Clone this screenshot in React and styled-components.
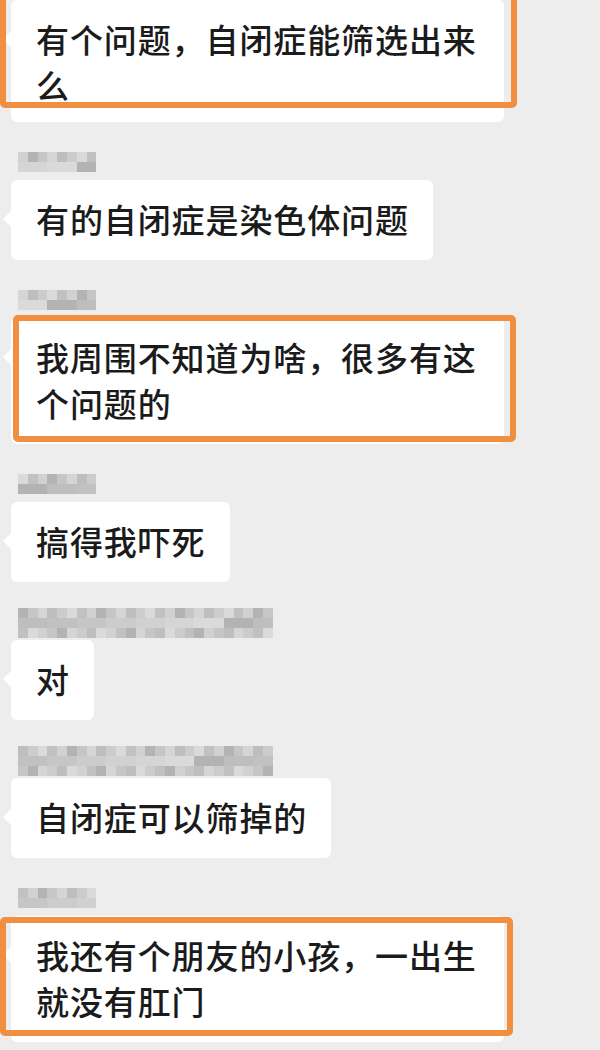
import React from 'react';
import styled, { createGlobalStyle } from 'styled-components';

const messages = [
  { text: '有个问题，自闭症能筛选出来么', hideName: true, tight: true, mark: { top: -12, bottom: 14, left: -11, right: -13 } },
  { text: '有的自闭症是染色体问题', name: 'short' },
  { text: '我周围不知道为啥，很多有这个问题的', name: 'short', mark: { top: -3, bottom: 2, left: 2, right: -12 } },
  { text: '搞得我吓死', name: 'short' },
  { text: '对', name: 'long' },
  { text: '自闭症可以筛掉的', name: 'long' },
  { text: '我还有个朋友的小孩，一出生就没有肛门', name: 'short', mark: { top: 1, bottom: 6, left: -11, right: -9 } },
];

const shades = ['#c9c9c9', '#b9b9b9', '#d3d3d3', '#c2c2c2', '#adadad', '#cecece', '#bdbdbd', '#d8d8d8'];

const buildCells = (cols, rows, seed) => {
  const cells = [];
  for (let r = 0; r < rows; r++) {
    for (let c = 0; c < cols; c++) {
      const n = (c * 7 + r * 13 + seed * 5 + ((c * r) % 3)) % shades.length;
      cells.push(shades[n]);
    }
  }
  return cells;
};

const App = () => {
  return (
    <>
      <GlobalStyle />
      <Chat>
        {messages.map((msg, i) => {
          const long = msg.name === 'long';
          const cols = long ? 26 : 8;
          const rows = long ? 3 : 2;
          return (
            <Group key={i}>
              {!msg.hideName && (
                <NameRow>
                  <Mosaic $cols={cols} $long={long}>
                    {buildCells(cols, rows, i).map((shade, k) => (
                      <Cell key={k} $shade={shade} />
                    ))}
                  </Mosaic>
                </NameRow>
              )}
              <Bubble $tight={msg.tight}>
                {msg.text}
                {msg.mark && (
                  <Highlight
                    $top={msg.mark.top}
                    $bottom={msg.mark.bottom}
                    $left={msg.mark.left}
                    $right={msg.mark.right}
                  />
                )}
              </Bubble>
            </Group>
          );
        })}
      </Chat>
    </>
  );
};

export default App;

const GlobalStyle = createGlobalStyle`
  html, body {
    margin: 0;
    padding: 0;
    background: #ededed;
    overflow: hidden;
  }
  body {
    font-family: "Noto Sans CJK SC", "Noto Sans", sans-serif;
  }
`;

const Chat = styled.div`
  width: 600px;
  height: 1050px;
  box-sizing: border-box;
  padding: 0 0 0 11px;
  display: flex;
  flex-direction: column;
  gap: 26px;
  overflow: hidden;
`;

const Group = styled.div`
  display: flex;
  flex-direction: column;
  align-items: flex-start;
`;

const NameRow = styled.div`
  height: 24px;
  margin: 0 0 8px 7px;
  display: flex;
  align-items: flex-end;
`;

const Mosaic = styled.div`
  display: grid;
  grid-template-columns: repeat(${({ $cols }) => $cols}, 9.8px);
  grid-auto-rows: 10px;
  filter: blur(0.7px);
  opacity: 0.9;
  ${({ $long }) => $long && 'margin-bottom: -6px;'}
`;

const Cell = styled.span`
  background: ${({ $shade }) => $shade};
`;

const Bubble = styled.div`
  position: relative;
  box-sizing: border-box;
  max-width: 493px;
  padding: 16px 24px ${({ $tight }) => ($tight ? '14px' : '18px')} 25px;
  background: #ffffff;
  border-radius: 6px;
  font-size: 33px;
  font-weight: 500;
  line-height: 46px;
  letter-spacing: 0.9px;
  color: #1b1b1b;
  word-break: break-all;

  &::before {
    content: '';
    position: absolute;
    left: -8px;
    top: 31px;
    border-top: 8px solid transparent;
    border-bottom: 8px solid transparent;
    border-right: 8px solid #ffffff;
  }
`;

const Highlight = styled.div`
  position: absolute;
  top: ${({ $top }) => $top}px;
  bottom: ${({ $bottom }) => $bottom}px;
  left: ${({ $left }) => $left}px;
  right: ${({ $right }) => $right}px;
  border: 6px solid #ef8f3f;
  border-radius: 5px;
  pointer-events: none;
`;
